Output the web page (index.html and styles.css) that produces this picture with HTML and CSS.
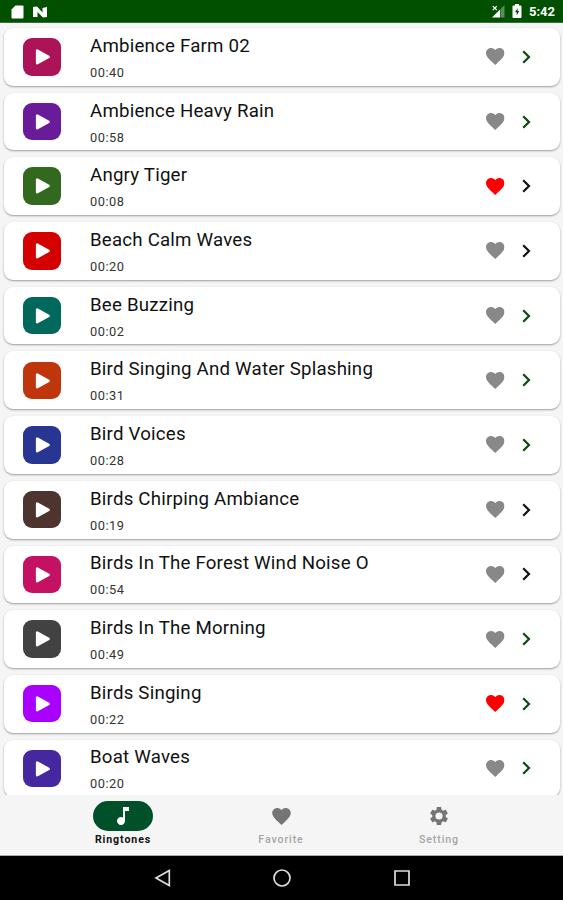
FILE: index.html
```html
<!DOCTYPE html>
<html lang="en">
	<head>
		<meta charset="UTF-8">
		<meta name="viewport" content="width=device-width,initial-scale=1">
		<title>Ringtones</title>
		<link rel="stylesheet" href="styles.css">
	</head>
	<body>
		<svg class="sprite" aria-hidden="true">
			<symbol id="play" viewBox="0 0 37 37">
				<path d="M14 12.400v12.400l11.200-6.200z" fill="#fff" stroke="#fff" stroke-width="2.600" stroke-linejoin="round"/>
			</symbol>
			<symbol id="heart" viewBox="2 3 20 18.350">
				<path d="M12 21.350l-1.450-1.320C5.400 15.360 2 12.280 2 8.500 2 5.420 4.420 3 7.500 3c1.740 0 3.410.810 4.500 2.090C13.090 3.810 14.760 3 16.500 3 19.580 3 22 5.420 22 8.500c0 3.780-3.400 6.860-8.550 11.540z"/>
			</symbol>
			<symbol id="arrow" viewBox="0 0 9 14">
				<path d="M1.200 1.200L7 7l-5.800 5.800" fill="none" stroke="currentColor" stroke-width="2.200"/>
			</symbol>
		</svg>
		<header class="status">
			<svg class="status__sd" viewBox="0 0 13 14"><path d="M4.500 .5h7q1 0 1 1v11q0 1-1 1h-10q-1 0-1-1v-8z"/></svg>
			<svg class="status__n" viewBox="0 0 14 12"><path d="M0 11V1l4-.5 5.500 6V2L14 1v10l-4 .5L4.500 6v5z"/></svg>
			<svg class="status__signal" viewBox="0 0 13 13">
				<path d="M12.500 0v12.500H8.500V4z" opacity=".35"/>
				<path d="M8 4.500v8H0z"/>
				<path d="M.8 1.200l4 4m0-4l-4 4" stroke="#fff" stroke-width="1.200"/>
			</svg>
			<svg class="status__battery" viewBox="0 0 10 14">
				<path d="M3 0h4v1.500h1.500q1 0 1 1V13q0 1-1 1h-7q-1 0-1-1V2.500q0-1 1-1H3z"/>
				<path d="M5.600 4L3 8.300h1.700V11.500L7.200 7H5.600z" fill="#005000"/>
			</svg>
			<span class="status__time">5:42</span>
		</header>
		<main class="list">
			<article class="card">
				<svg class="play play--crimson"><use href="#play"/></svg>
				<div class="card__body">
					<h2 class="card__title">Ambience Farm 02</h2>
					<p class="card__time">00:40</p>
				</div>
				<svg class="heart"><use href="#heart"/></svg>
				<svg class="arrow"><use href="#arrow"/></svg>
			</article>
			<article class="card">
				<svg class="play play--purple"><use href="#play"/></svg>
				<div class="card__body">
					<h2 class="card__title">Ambience Heavy Rain</h2>
					<p class="card__time">00:58</p>
				</div>
				<svg class="heart"><use href="#heart"/></svg>
				<svg class="arrow"><use href="#arrow"/></svg>
			</article>
			<article class="card">
				<svg class="play play--green"><use href="#play"/></svg>
				<div class="card__body">
					<h2 class="card__title">Angry Tiger</h2>
					<p class="card__time">00:08</p>
				</div>
				<svg class="heart is-liked"><use href="#heart"/></svg>
				<svg class="arrow arrow--dark"><use href="#arrow"/></svg>
			</article>
			<article class="card">
				<svg class="play play--red"><use href="#play"/></svg>
				<div class="card__body">
					<h2 class="card__title">Beach Calm Waves</h2>
					<p class="card__time">00:20</p>
				</div>
				<svg class="heart"><use href="#heart"/></svg>
				<svg class="arrow arrow--dark"><use href="#arrow"/></svg>
			</article>
			<article class="card">
				<svg class="play play--teal"><use href="#play"/></svg>
				<div class="card__body">
					<h2 class="card__title">Bee Buzzing</h2>
					<p class="card__time">00:02</p>
				</div>
				<svg class="heart"><use href="#heart"/></svg>
				<svg class="arrow"><use href="#arrow"/></svg>
			</article>
			<article class="card">
				<svg class="play play--orange"><use href="#play"/></svg>
				<div class="card__body">
					<h2 class="card__title">Bird Singing And Water Splashing</h2>
					<p class="card__time">00:31</p>
				</div>
				<svg class="heart"><use href="#heart"/></svg>
				<svg class="arrow"><use href="#arrow"/></svg>
			</article>
			<article class="card">
				<svg class="play play--blue"><use href="#play"/></svg>
				<div class="card__body">
					<h2 class="card__title">Bird Voices</h2>
					<p class="card__time">00:28</p>
				</div>
				<svg class="heart"><use href="#heart"/></svg>
				<svg class="arrow"><use href="#arrow"/></svg>
			</article>
			<article class="card">
				<svg class="play play--brown"><use href="#play"/></svg>
				<div class="card__body">
					<h2 class="card__title">Birds Chirping Ambiance</h2>
					<p class="card__time">00:19</p>
				</div>
				<svg class="heart"><use href="#heart"/></svg>
				<svg class="arrow arrow--dark"><use href="#arrow"/></svg>
			</article>
			<article class="card">
				<svg class="play play--pink"><use href="#play"/></svg>
				<div class="card__body">
					<h2 class="card__title">Birds In The Forest Wind Noise O</h2>
					<p class="card__time">00:54</p>
				</div>
				<svg class="heart"><use href="#heart"/></svg>
				<svg class="arrow arrow--dark"><use href="#arrow"/></svg>
			</article>
			<article class="card">
				<svg class="play play--gray"><use href="#play"/></svg>
				<div class="card__body">
					<h2 class="card__title">Birds In The Morning</h2>
					<p class="card__time">00:49</p>
				</div>
				<svg class="heart"><use href="#heart"/></svg>
				<svg class="arrow"><use href="#arrow"/></svg>
			</article>
			<article class="card">
				<svg class="play play--violet"><use href="#play"/></svg>
				<div class="card__body">
					<h2 class="card__title">Birds Singing</h2>
					<p class="card__time">00:22</p>
				</div>
				<svg class="heart is-liked"><use href="#heart"/></svg>
				<svg class="arrow"><use href="#arrow"/></svg>
			</article>
			<article class="card">
				<svg class="play play--indigo"><use href="#play"/></svg>
				<div class="card__body">
					<h2 class="card__title">Boat Waves</h2>
					<p class="card__time">00:20</p>
				</div>
				<svg class="heart"><use href="#heart"/></svg>
				<svg class="arrow"><use href="#arrow"/></svg>
			</article>
		</main>
		<nav class="tabs">
			<a class="tab is-active">
				<span class="tab__icon"><svg class="tab__note" viewBox="6 3 12 18"><path d="M12 3v10.550c-.590-.340-1.270-.550-2-.550-2.210 0-4 1.790-4 4s1.790 4 4 4 4-1.790 4-4V7h4V3z"/></svg></span>
				<span class="tab__label">Ringtones</span>
			</a>
			<a class="tab">
				<span class="tab__icon"><svg class="tab__heart"><use href="#heart"/></svg></span>
				<span class="tab__label">Favorite</span>
			</a>
			<a class="tab">
				<span class="tab__icon"><svg class="tab__gear" viewBox="2 2 20 20"><path fill-rule="evenodd" d="M19.430 12.980c.040-.320.070-.640.070-.980s-.030-.660-.070-.980l2.110-1.650c.190-.150.240-.420.120-.640l-2-3.460c-.120-.220-.390-.300-.610-.220l-2.490 1c-.520-.400-1.080-.730-1.690-.980l-.380-2.650C14.460 2.180 14.250 2 14 2h-4c-.250 0-.460.180-.490.420l-.380 2.650c-.610.250-1.170.590-1.690.980l-2.490-1c-.230-.090-.490 0-.610.220l-2 3.460c-.130.220-.070.490.120.640l2.110 1.650c-.040.320-.070.650-.070.980s.030.660.070.980l-2.110 1.650c-.190.150-.240.420-.120.640l2 3.460c.120.220.390.300.610.220l2.490-1c.520.400 1.080.730 1.690.980l.380 2.650c.030.240.240.420.490.420h4c.250 0 .460-.180.490-.420l.380-2.650c.610-.250 1.170-.590 1.690-.980l2.490 1c.230.090.490 0 .610-.220l2-3.460c.120-.220.070-.490-.120-.640zM12 16a4 4 0 1 1 0-8 4 4 0 0 1 0 8z"/></svg></span>
				<span class="tab__label">Setting</span>
			</a>
		</nav>
		<footer class="navbar">
			<svg class="navbar__icon" viewBox="0 0 18 18"><path d="M16.300 1.500v15L3 9z"/></svg>
			<svg class="navbar__icon" viewBox="0 0 18 18"><circle cx="9" cy="9" r="8"/></svg>
			<svg class="navbar__icon" viewBox="0 0 18 18"><path d="M2 2h14v14H2z"/></svg>
		</footer>
	</body>
</html>
```

FILE: styles.css
```css
*
{
	box-sizing: border-box;
}

body
{
	margin: 0;
	height: 900px;
	display: flex;
	flex-direction: column;
	overflow: hidden;
	background-color: #f5f5f5;
	font-family: Roboto, 'Liberation Sans', sans-serif;
}

.sprite
{
	display: none;
}

/* status bar */
.status
{
	flex: none;
	height: 23px;
	padding: 1px 8px 0 11px;
	display: flex;
	align-items: center;
	background-color: #005000;
	border-bottom: 1px solid #386f38;
	color: #fff;
	fill: #fff;
}

.status__sd
{
	width: 13px;
	height: 14px;
}

.status__n
{
	width: 14px;
	height: 12px;
	margin-left: 9px;
}

.status__signal
{
	width: 13px;
	height: 13px;
	margin-left: auto;
}

.status__battery
{
	width: 10px;
	height: 14px;
	margin: 0 7px 1px;
}

.status__time
{
	font-size: 13px;
	font-weight: 700;
	line-height: 20px;
}

/* list */
.list
{
	flex: 1;
	min-height: 0;
	overflow: hidden;
	display: flex;
	flex-direction: column;
	gap: 7px;
	padding: 5px 3.500px 0 4px;
}

.card
{
	flex: none;
	height: 57.700px;
	padding: 0 29px 0 19px;
	display: flex;
	align-items: center;
	background-color: #fff;
	border-radius: 9px;
	box-shadow: 0 1px 2px rgba(0, 0, 0, .36);
}

.play
{
	width: 37.500px;
	height: 37.500px;
	border-radius: 9px;
}

.play--crimson { background-color: #ad1457; }
.play--purple { background-color: #6a1b9a; }
.play--green { background-color: #33691e; }
.play--red { background-color: #d50000; }
.play--teal { background-color: #00695c; }
.play--orange { background-color: #bf360c; }
.play--blue { background-color: #283593; }
.play--brown { background-color: #4e342e; }
.play--pink { background-color: #c51162; }
.play--gray { background-color: #424242; }
.play--violet { background-color: #aa00ff; }
.play--indigo { background-color: #4527a0; }

.card__body
{
	flex: 1;
	padding: 2px 0 0 29.500px;
}

.card__title
{
	margin: 0;
	font-size: 18.700px;
	font-weight: 400;
	line-height: 24px;
	letter-spacing: .2px;
	color: #111;
}

.card__time
{
	margin: 6px 0 0;
	font-size: 12.800px;
	line-height: 18px;
	letter-spacing: .5px;
	color: #333;
}

.heart
{
	width: 18.500px;
	height: 17px;
	margin-right: 17px;
	fill: #888;
}

.heart.is-liked
{
	fill: #f00;
}

.arrow
{
	width: 9px;
	height: 14px;
	color: #0b4a0b;
}

.arrow--dark
{
	color: #111;
}

/* bottom tabs */
.tabs
{
	flex: none;
	height: 61px;
	padding: 6px 45px 0 44px;
	display: flex;
	background-color: #f5f5f5;
	border-bottom: 1px solid #aaa;
	fill: #757575;
}

.tab
{
	flex: 1;
	display: flex;
	flex-direction: column;
	align-items: center;
	color: #a5a5a5;
}

.tab__icon
{
	width: 60px;
	height: 30px;
	display: flex;
	align-items: center;
	justify-content: center;
	border-radius: 15px;
}

.tab__note
{
	width: 14px;
	height: 18px;
}

.tab__heart
{
	width: 19px;
	height: 17px;
}

.tab__gear
{
	width: 18px;
	height: 18px;
}

.tab__label
{
	font-size: 10.600px;
	font-weight: 500;
	line-height: 17px;
	letter-spacing: .9px;
}

.tab.is-active
{
	color: #111;
}

.tab.is-active .tab__icon
{
	background-color: #00502a;
	fill: #fff;
}

.tab.is-active .tab__label
{
	font-weight: 700;
}

/* system navigation */
.navbar
{
	flex: none;
	height: 44px;
	display: flex;
	align-items: center;
	justify-content: center;
	gap: 102px;
	background-color: #000;
}

.navbar__icon
{
	width: 18px;
	height: 18px;
	fill: none;
	stroke: #ddd;
	stroke-width: 1.700;
}
```
